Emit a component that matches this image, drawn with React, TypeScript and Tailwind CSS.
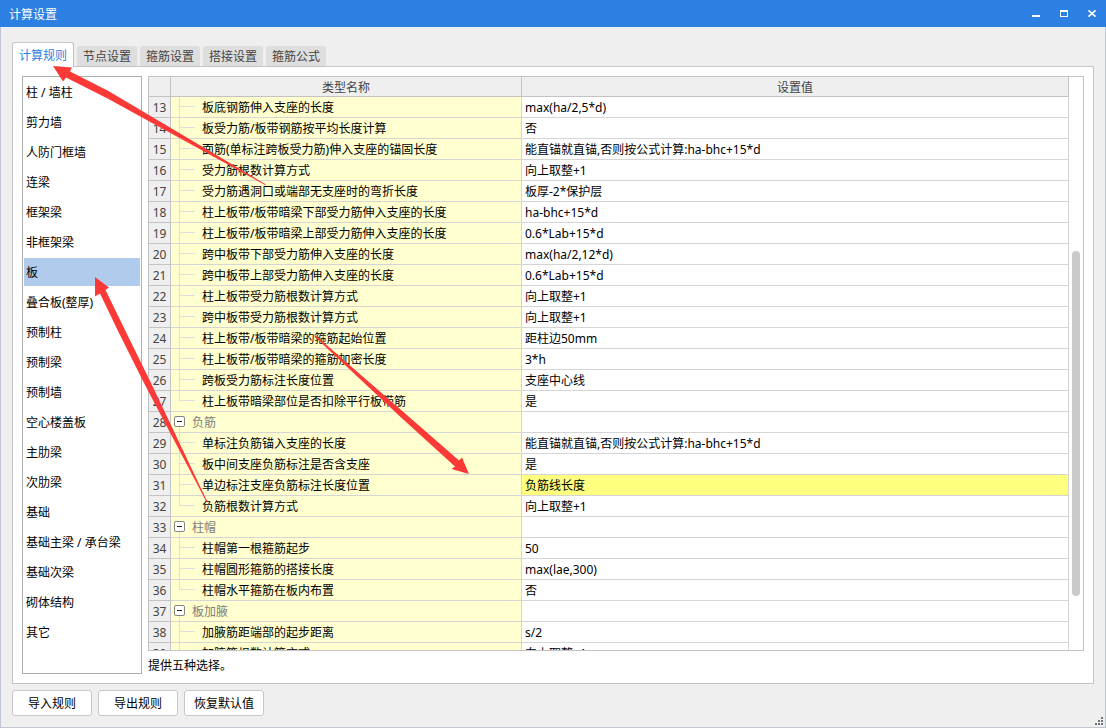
import React, { useState } from 'react';

interface Rule {
  no: number;
  name: string;
  value?: string;
  group?: boolean;
  last?: boolean;
}

const tabs = ['计算规则', '节点设置', '箍筋设置', '搭接设置', '箍筋公式'];

const categories = [
  '柱 / 墙柱',
  '剪力墙',
  '人防门框墙',
  '连梁',
  '框架梁',
  '非框架梁',
  '板',
  '叠合板(整厚)',
  '预制柱',
  '预制梁',
  '预制墙',
  '空心楼盖板',
  '主肋梁',
  '次肋梁',
  '基础',
  '基础主梁 / 承台梁',
  '基础次梁',
  '砌体结构',
  '其它',
];

const rules: Rule[] = [
  { no: 13, name: '板底钢筋伸入支座的长度', value: 'max(ha/2,5*d)' },
  { no: 14, name: '板受力筋/板带钢筋按平均长度计算', value: '否' },
  { no: 15, name: '面筋(单标注跨板受力筋)伸入支座的锚固长度', value: '能直锚就直锚,否则按公式计算:ha-bhc+15*d' },
  { no: 16, name: '受力筋根数计算方式', value: '向上取整+1' },
  { no: 17, name: '受力筋遇洞口或端部无支座时的弯折长度', value: '板厚-2*保护层' },
  { no: 18, name: '柱上板带/板带暗梁下部受力筋伸入支座的长度', value: 'ha-bhc+15*d' },
  { no: 19, name: '柱上板带/板带暗梁上部受力筋伸入支座的长度', value: '0.6*Lab+15*d' },
  { no: 20, name: '跨中板带下部受力筋伸入支座的长度', value: 'max(ha/2,12*d)' },
  { no: 21, name: '跨中板带上部受力筋伸入支座的长度', value: '0.6*Lab+15*d' },
  { no: 22, name: '柱上板带受力筋根数计算方式', value: '向上取整+1' },
  { no: 23, name: '跨中板带受力筋根数计算方式', value: '向上取整+1' },
  { no: 24, name: '柱上板带/板带暗梁的箍筋起始位置', value: '距柱边50mm' },
  { no: 25, name: '柱上板带/板带暗梁的箍筋加密长度', value: '3*h' },
  { no: 26, name: '跨板受力筋标注长度位置', value: '支座中心线' },
  { no: 27, name: '柱上板带暗梁部位是否扣除平行板带筋', value: '是', last: true },
  { no: 28, name: '负筋', group: true },
  { no: 29, name: '单标注负筋锚入支座的长度', value: '能直锚就直锚,否则按公式计算:ha-bhc+15*d' },
  { no: 30, name: '板中间支座负筋标注是否含支座', value: '是' },
  { no: 31, name: '单边标注支座负筋标注长度位置', value: '负筋线长度' },
  { no: 32, name: '负筋根数计算方式', value: '向上取整+1', last: true },
  { no: 33, name: '柱帽', group: true },
  { no: 34, name: '柱帽第一根箍筋起步', value: '50' },
  { no: 35, name: '柱帽圆形箍筋的搭接长度', value: 'max(lae,300)' },
  { no: 36, name: '柱帽水平箍筋在板内布置', value: '否', last: true },
  { no: 37, name: '板加腋', group: true },
  { no: 38, name: '加腋筋距端部的起步距离', value: 's/2' },
  { no: 39, name: '加腋筋根数计算方式', value: '向上取整+1' },
];

const TitleBar: React.FC = () => (
  <header className="flex h-[27px] shrink-0 items-center justify-between bg-[#2c80e2] pr-2 pl-[9px] text-white">
    <h1 className="pt-[2px]">计算设置</h1>
    <div className="flex gap-4">
      <button aria-label="最小化">
        <svg width="12" height="12" shapeRendering="crispEdges">
          <rect x="2" y="7" width="8" height="2" fill="#fff" />
        </svg>
      </button>
      <button aria-label="最大化">
        <svg width="12" height="12" shapeRendering="crispEdges">
          <path d="M2 2h8v7H2zM3 4v4h6V4z" fill="#fff" fillRule="evenodd" />
        </svg>
      </button>
      <button aria-label="关闭">
        <svg width="12" height="12">
          <path d="M2.5 2.3l7 6.4M9.5 2.3l-7 6.4" stroke="#fff" strokeWidth="1.7" />
        </svg>
      </button>
    </div>
  </header>
);

// Connector lines in front of a child row
const Branch: React.FC<{ last?: boolean }> = ({ last }) => (
  <svg className="shrink-0" width="31" height="20" shapeRendering="crispEdges">
    <path d={last ? 'M8.5 0V10M8 9.5H24' : 'M8.5 0V20M8 9.5H24'} stroke="#dedede" fill="none" />
  </svg>
);

const Collapse: React.FC<{ label: string }> = ({ label }) => (
  <button className="shrink-0" aria-label={label}>
    <svg width="21" height="20">
      <path d="M8.5 15V20" stroke="#dedede" />
      <rect x="3.5" y="4.5" width="10" height="10" rx="1.5" fill="#fff" stroke="#858585" />
      <path d="M6 9.5H11" stroke="#222" />
    </svg>
  </button>
);

const RuleTable: React.FC = () => (
  <table className="w-full table-fixed border-separate border-spacing-0">
    <colgroup>
      <col className="w-[22px]" />
      <col className="w-[351px]" />
      <col />
    </colgroup>
    <thead>
      <tr className="h-5 bg-[#efefef] text-[#444]">
        <th className="border-r border-b border-[#c3c3c3] p-0" aria-label="序号"></th>
        <th className="border-r border-b border-[#c3c3c3] p-0 pt-[2px] font-normal">类型名称</th>
        <th className="border-r border-b border-[#c3c3c3] p-0 pt-[2px] font-normal">设置值</th>
      </tr>
    </thead>
    <tbody>
      {rules.map((rule) => (
        <tr key={rule.no} className="h-[21px]">
          <td className="border-r border-b border-[#c3c3c3] bg-[#efefef] p-0 pt-[2px] text-center text-[#444]">{rule.no}</td>
          <td className="border-r border-b border-[#d5d5d5] bg-[#ffffcf] p-0">
            <div className="flex h-5 items-center">
              {rule.group ? <Collapse label={`折叠${rule.name}`} /> : <Branch last={rule.last} />}
              <span className={rule.group ? 'pt-[2px] text-[#808080]' : 'pt-[2px]'}>{rule.name}</span>
            </div>
          </td>
          <td className={`border-r border-b border-[#d5d5d5] p-0 pt-[2px] pl-[3px] ${rule.no === 31 ? 'bg-[#ffff80]' : 'bg-white'}`}>
            {rule.value}
          </td>
        </tr>
      ))}
    </tbody>
  </table>
);

const Arrows: React.FC = () => (
  <svg className="pointer-events-none absolute top-0 left-0" width="480" height="510" fill="#fb3a37">
    <path d="M53 66L72 67.5L70 71.5L108 90.7L266 184.5L265 185L108 98.8L66 77.5L63 81.5Z" />
    <path d="M95 277L109 287.5L105.5 290L125 330L151 383L207.5 502L206.5 502L144 383L117.5 330L100 293.5L95 296.5Z" />
    <path d="M469 474L462 457.5L459 460.5L400 409L315 335L314 336L400 416.5L455 466.5L451.5 469Z" />
  </svg>
);

const App: React.FC = () => {
  const [activeTab, setActiveTab] = useState('计算规则');
  const [category, setCategory] = useState('板');

  return (
    <div className="relative flex h-screen flex-col overflow-hidden bg-[#efefef] font-['Noto_Sans','Noto_Sans_CJK_SC',sans-serif] text-xs text-black">
      <TitleBar />
      <main className="flex min-h-0 flex-1 flex-col border-x border-b border-[#c0c5d2] px-[11px] pt-[15px] pb-[11px]">
        <div role="tablist" className="flex items-end gap-[3px]">
          {tabs.map((tab) => (
            <button
              key={tab}
              role="tab"
              aria-selected={tab === activeTab}
              onClick={() => setActiveTab(tab)}
              className={
                tab === activeTab
                  ? 'relative -mb-px h-[25px] rounded-t-[3px] border border-b-0 border-[#c3c4c8] bg-white px-[6px] pt-[2px] text-[#2c80e2]'
                  : 'h-5 rounded-t-[3px] bg-[#dedede] px-[6px] pt-[2px] text-[#444]'
              }
            >
              {tab}
            </button>
          ))}
        </div>

        <section className="flex min-h-0 flex-1 gap-[6px] border border-[#c3c4c8] bg-white p-[9px]">
          <nav className="flex w-[120px] shrink-0 flex-col gap-[2px] overflow-hidden border border-[#adadad] p-px">
            {categories.map((item) => (
              <button
                key={item}
                onClick={() => setCategory(item)}
                className={`h-7 shrink-0 pt-[2px] pl-[2px] text-left ${item === category ? 'bg-[#b1cbec]' : ''}`}
              >
                {item}
              </button>
            ))}
          </nav>

          <div className="flex min-w-0 flex-1 flex-col">
            <div className="flex min-h-0 flex-1 border border-[#c3c3c3]">
              <div className="min-w-0 flex-1 overflow-hidden">
                <RuleTable />
              </div>
              <div className="grid w-[14px] shrink-0 grid-rows-[174fr_345fr_54fr] justify-center">
                <div className="row-start-2 w-2 rounded-full bg-[#cacaca]"></div>
              </div>
            </div>
            <p className="h-[23px] pt-[7px]">提供五种选择。</p>
          </div>
        </section>

        <footer className="mt-[6px] flex gap-[6px]">
          {['导入规则', '导出规则', '恢复默认值'].map((label) => (
            <button key={label} className="h-[26px] w-20 rounded-[3px] border border-[#c8c8c8] bg-white pt-[2px]">
              {label}
            </button>
          ))}
        </footer>
      </main>

      <svg className="absolute right-[3px] bottom-[3px]" width="9" height="9" fill="#70757d" shapeRendering="crispEdges">
        <path d="M7 1h2v2H7zM4 4h2v2H4zM7 4h2v2H7zM1 7h2v2H1zM4 7h2v2H4zM7 7h2v2H7z" />
      </svg>
      <Arrows />
    </div>
  );
};

export default App;
